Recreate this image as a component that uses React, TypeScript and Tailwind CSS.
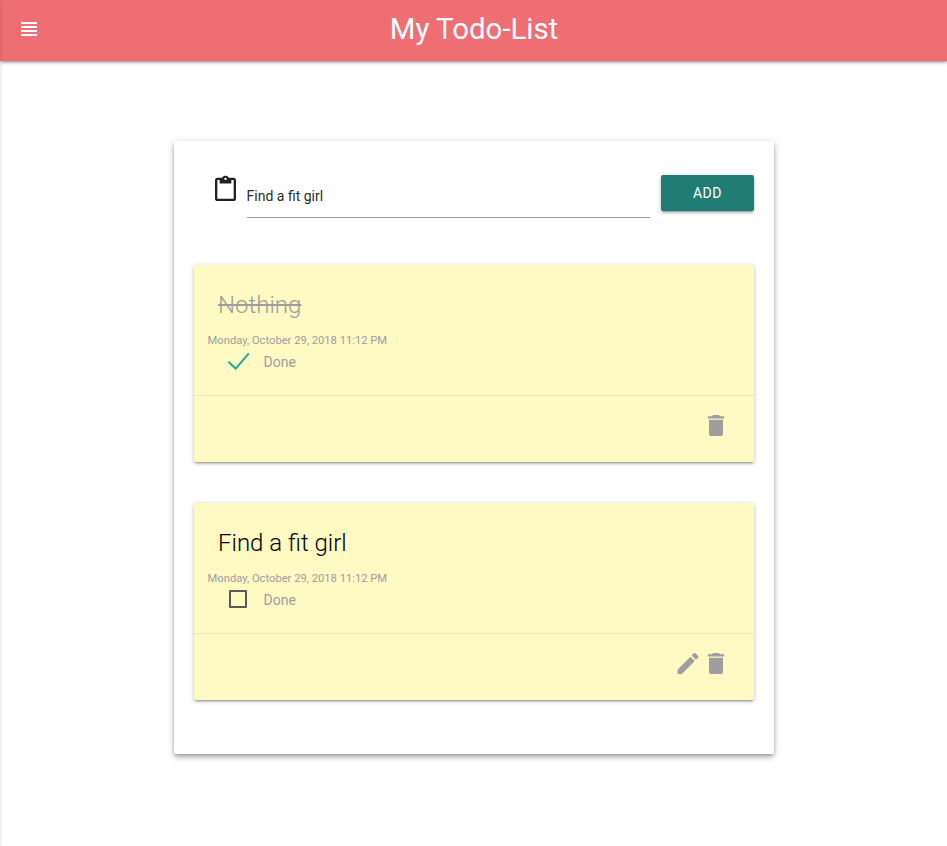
import React from "react";

type Todo = { title: string; date: string; done: boolean };

const todos: Todo[] = [
  { title: "Nothing", date: "Monday, October 29, 2018 11:12 PM", done: true },
  { title: "Find a fit girl", date: "Monday, October 29, 2018 11:12 PM", done: false },
];

function Icon({ d, className }: { d: string; className: string }) {
  return (
    <svg viewBox="0 0 24 24" fill="currentColor" className={`block shrink-0 ${className}`}>
      <path d={d} />
    </svg>
  );
}

const MENU = "M4 15h16v-2H4v2zm0 4h16v-2H4v2zm0-8h16V9H4v2zm0-6v2h16V5H4z";
const PASTE =
  "M19 2h-4.18C14.4.84 13.3 0 12 0c-1.3 0-2.4.84-2.82 2H5c-1.1 0-2 .9-2 2v16c0 1.1.9 2 2 2h14c1.1 0 2-.9 2-2V4c0-1.1-.9-2-2-2zm-7 0c.55 0 1 .45 1 1s-.45 1-1 1-1-.45-1-1 .45-1 1-1zm7 18H5V4h2v3h10V4h2v16z";
const TRASH = "M6 19c0 1.1.9 2 2 2h8c1.1 0 2-.9 2-2V7H6v12zM19 4h-3.5l-1-1h-5l-1 1H5v2h14V4z";
const EDIT =
  "M3 17.25V21h3.75L17.81 9.94l-3.75-3.75L3 17.25zM20.71 7.04c.39-.39.39-1.02 0-1.41l-2.34-2.34c-.39-.39-1.02-.39-1.41 0l-1.83 1.83 3.75 3.75 1.83-1.83z";

function TodoCard({ todo }: { todo: Todo }) {
  return (
    <article className="flex h-[197px] flex-col rounded-[2px] bg-[#fff9c4] shadow-[0_2px_2px_0_rgba(0,0,0,0.14),0_3px_1px_-2px_rgba(0,0,0,0.12),0_1px_5px_0_rgba(0,0,0,0.2)]">
      <div className="h-[130px] pt-6">
        <h2
          className={`pl-6 text-[24px] leading-8 font-light ${
            todo.done ? "text-[#9e9e9e] line-through" : "text-black"
          }`}
        >
          {todo.title}
        </h2>
        <p className="mt-[13px] pl-[13.6px] text-[11.2px] leading-[14px] text-[#9e9e9e]">{todo.date}</p>
        <label className="mt-[2px] flex h-6 items-center pl-[33px] text-[14px] text-[#9e9e9e]">
          {todo.done ? (
            <svg viewBox="0 0 24 20" className="block h-5 w-6" fill="none" stroke="#26a69a" strokeWidth="2">
              <path d="M1.3 9.8 8.7 16.6 21.8 1.3" />
            </svg>
          ) : (
            <span className="mr-1 mb-[2px] ml-0.5 block h-[18px] w-[18px] rounded-[1px] border-2 border-[#5a5a5a]" />
          )}
          <span className="ml-[12.6px]">Done</span>
        </label>
      </div>
      <div className="flex flex-1 items-start justify-end border-t border-[rgba(160,160,160,0.2)] pt-[15px] pr-6 text-[#9e9e9e]">
        {!todo.done && <Icon d={EDIT} className="h-7 w-7 translate-y-[0.5px]" />}
        <Icon d={TRASH} className="h-7 w-7 translate-y-[0.5px]" />
      </div>
    </article>
  );
}

export default function App() {
  return (
    <div className="relative min-h-[846px] overflow-hidden bg-white font-[Roboto,sans-serif] text-[rgba(0,0,0,0.87)]">
      <header className="grid h-[61px] grid-cols-[1fr_auto_1fr] items-start bg-[#ee6e73] text-white shadow-[0_2px_2px_0_rgba(0,0,0,0.14),0_3px_1px_-2px_rgba(0,0,0,0.12),0_1px_5px_0_rgba(0,0,0,0.2)]">
        <Icon d={MENU} className="mt-[17px] ml-[17px] h-6 w-6" />
        <h1 className="pl-px text-[29.4px] leading-[59px]">My Todo-List</h1>
      </header>
      <main className="mt-20 ml-[174px] h-[613px] w-[600px] rounded-[2px] bg-white px-5 pt-[34px] shadow-[0_4px_5px_0_rgba(0,0,0,0.14),0_1px_10px_0_rgba(0,0,0,0.12),0_2px_4px_-1px_rgba(0,0,0,0.3)]">
        <form className="flex h-[90px] items-start" onSubmit={(e) => e.preventDefault()}>
          <Icon d={PASTE} className="mt-px ml-[17.5px] h-7 w-7 -translate-x-[0.5px] -translate-y-[0.6px]" />
          <input
            className="ml-[7.1px] h-[43px] w-[403.4px] border-b border-[#9e9e9e] text-[14px] outline-none"
            defaultValue="Find a fit girl"
          />
          <button className="ml-[11px] h-9 w-[93px] rounded-[2px] bg-[#1f7d74] text-[14px] tracking-[0.5px] text-white shadow-[0_2px_2px_0_rgba(0,0,0,0.14),0_3px_1px_-2px_rgba(0,0,0,0.12),0_1px_5px_0_rgba(0,0,0,0.2)]">
            ADD
          </button>
        </form>
        <section className="flex flex-col gap-[41px]">
          {todos.map((t) => (
            <TodoCard key={t.title} todo={t} />
          ))}
        </section>
      </main>
      <aside className="absolute top-0 -left-[11px] h-full w-[10px] shadow-[0_2px_2px_0_rgba(0,0,0,0.14),0_3px_1px_-2px_rgba(0,0,0,0.12),0_1px_5px_0_rgba(0,0,0,0.2)]" />
    </div>
  );
}
